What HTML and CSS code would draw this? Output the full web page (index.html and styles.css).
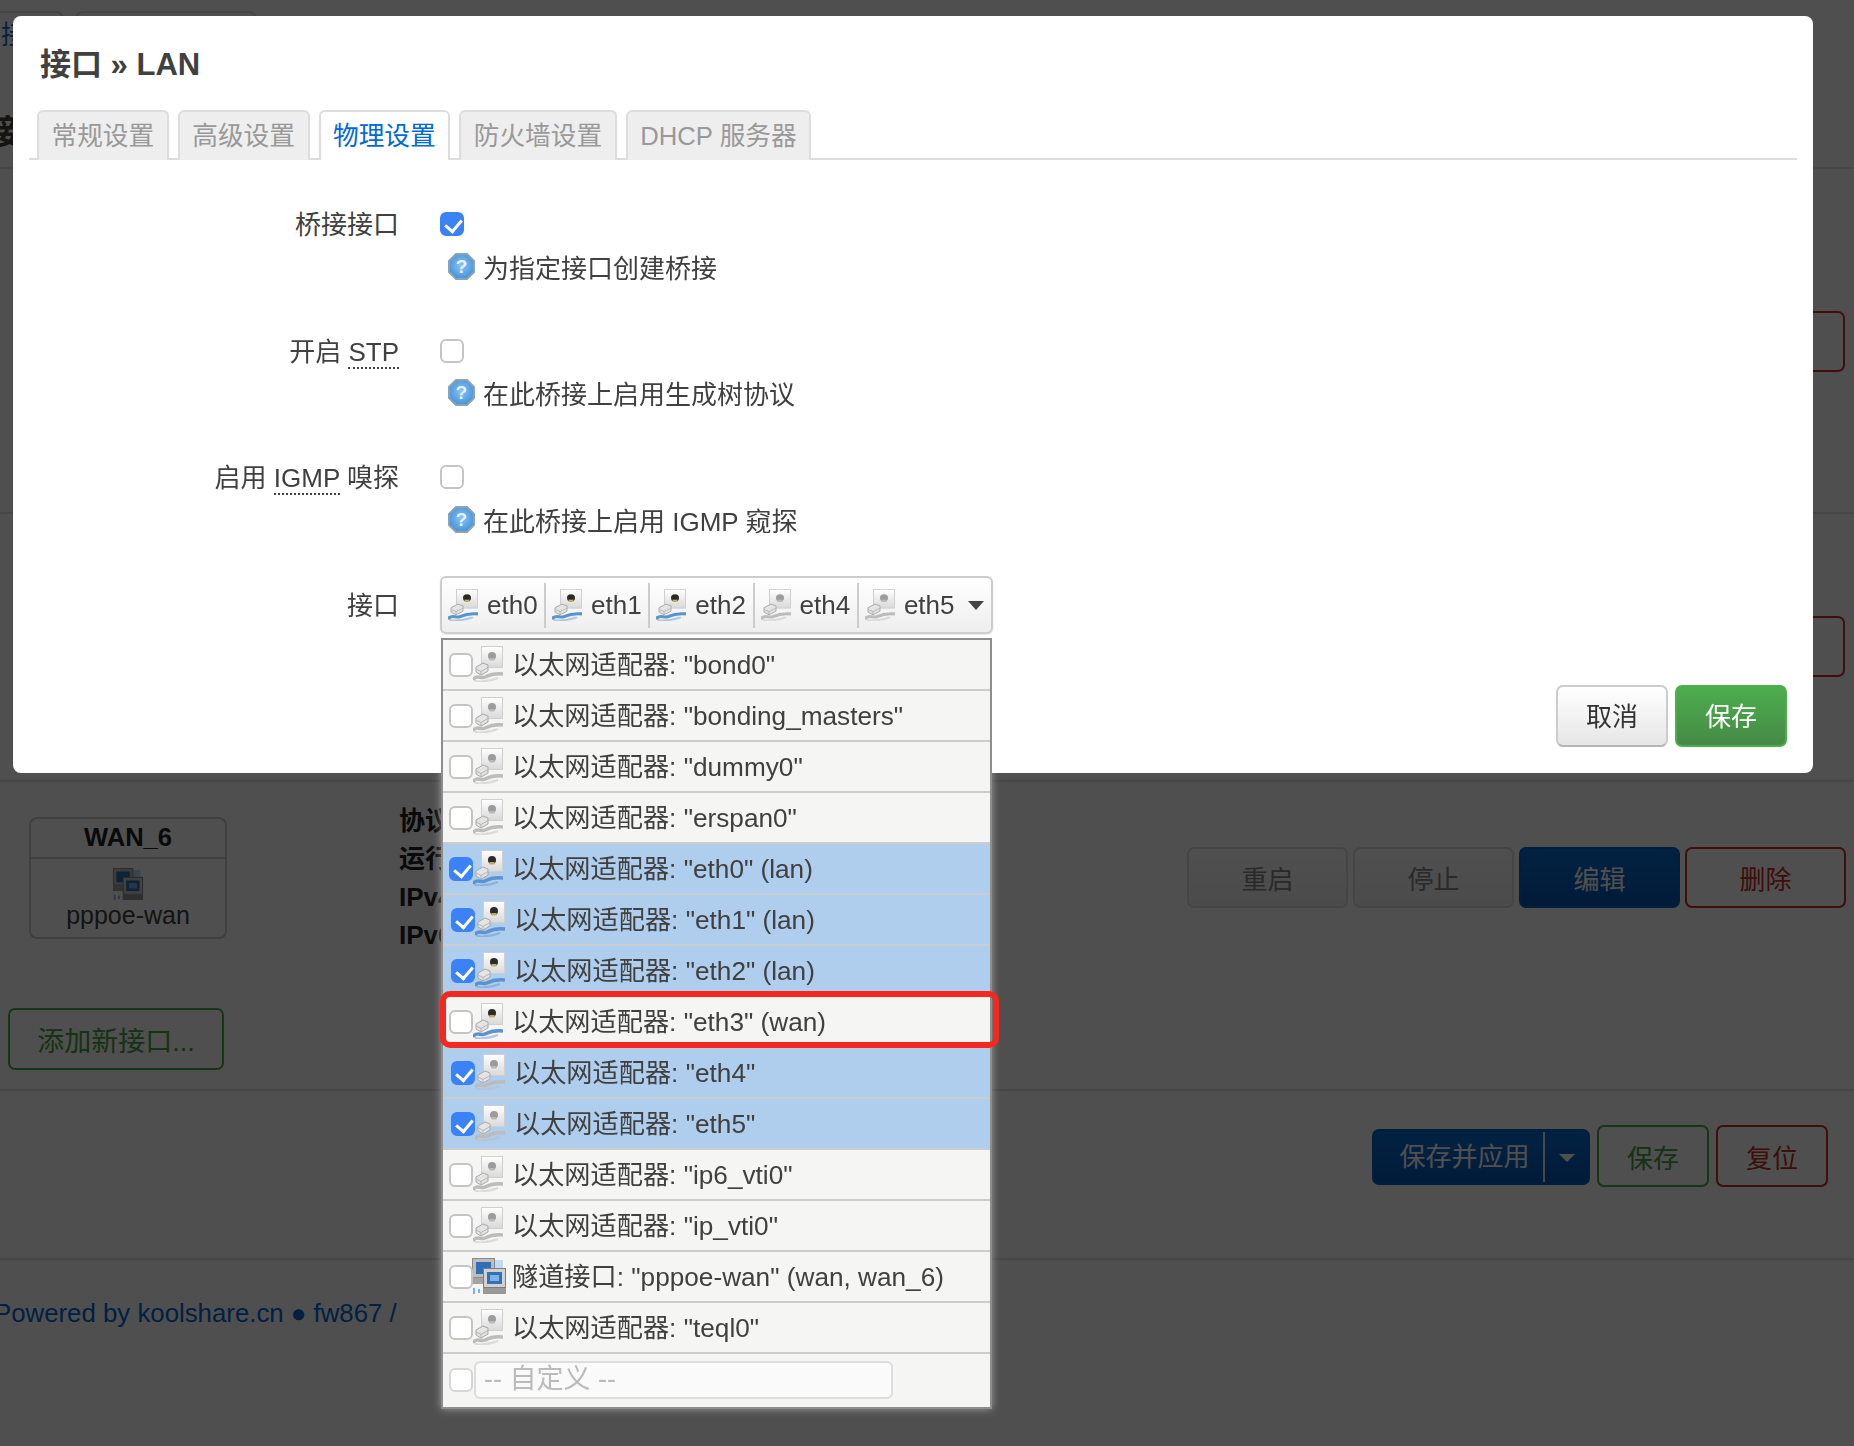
FILE: index.html

```html
<!DOCTYPE html>
<html lang="zh-cn">
<head>
    <meta charset="UTF-8">
    <title>接口 - LAN</title>
    <link rel="stylesheet" href="styles.css">
</head>
<body>
    <svg class="defs" width="0" height="0">
        <defs>
            <linearGradient id="port-fill" x1="0" y1="0" x2="0" y2="1">
                <stop offset="0" stop-color="#ffffff"/>
                <stop offset="1" stop-color="#d9d9d9"/>
            </linearGradient>
            <radialGradient id="help-fill" cx="0.5" cy="0.45" r="0.6">
                <stop offset="0" stop-color="#8cc4f2"/>
                <stop offset="1" stop-color="#3f8fd6"/>
            </radialGradient>
            <symbol id="icon-eth" viewBox="0 0 30 36" preserveAspectRatio="none">
                <rect x="8.5" y="0.5" width="21" height="21" fill="url(#port-fill)" stroke="#cfcfcf"/>
                <circle cx="19" cy="10" r="4" fill="var(--dot)"/>
                <path d="M16.5 12h5v2.5h-5z" fill="var(--dot2)"/>
                <path d="M3 21l7-4 5 2v6l-7 4-5-3z" fill="#e4e4e4" stroke="#a9a9a9"/>
                <path d="M3 23l5 2.5 7-4M8 25.5v3" fill="none" stroke="#b5b5b5"/>
                <path d="M0 34c3-6 8-1 12-3s9-4 18-3" fill="none" stroke="var(--cable)" stroke-width="3.5"/>
                <path d="M2 35c7 1 15 0 23-3" fill="none" stroke="var(--cable)" stroke-opacity="0.45" stroke-width="2"/>
            </symbol>
            <symbol id="icon-tunnel" viewBox="0 0 34 36">
                <rect x="22" y="2" width="9" height="12" fill="#c4dcf3"/>
                <rect x="0.5" y="0.5" width="22" height="19" fill="#bdbdbd" stroke="#8a8a8a"/>
                <rect x="4" y="4" width="15" height="12" fill="#2f6fb5"/>
                <rect x="0" y="20" width="23" height="6" fill="#a4a4a4"/>
                <rect x="11.5" y="10.5" width="22" height="19" fill="#d2d2d2" stroke="#7c7c7c"/>
                <rect x="15" y="14" width="15" height="12" fill="#2f72ba"/>
                <rect x="18" y="17" width="9" height="6" fill="#7fb2e4"/>
                <rect x="11" y="30" width="23" height="6" fill="#999999"/>
                <rect x="1" y="30" width="2" height="6" fill="#7fb2e4"/>
                <rect x="6" y="31" width="2" height="4" fill="#7fb2e4"/>
            </symbol>
            <symbol id="icon-help" viewBox="0 0 27 27">
                <polygon points="8,1 19,1 26,8 26,19 19,26 8,26 1,19 1,8" fill="url(#help-fill)" stroke="#8ba3b5" stroke-width="2"/>
                <text x="13.5" y="20" text-anchor="middle" class="help-mark">?</text>
            </symbol>
        </defs>
    </svg>

    <div class="page">
        <div class="top-tabs">
            <div class="top-tab top-tab-first">接口</div>
            <div class="top-tab top-tab-second"></div>
        </div>
        <h2 class="page-title">接口总览</h2>

        <section class="sec sec-a">
            <button class="btn btn-red btn-row">删除</button>
        </section>
        <section class="sec sec-b">
            <button class="btn btn-red btn-row">删除</button>
        </section>
        <section class="sec sec-wan">
            <div class="wan-box">
                <div class="wan-name">WAN_6</div>
                <div class="wan-body">
                    <svg class="wan-icon"><use href="#icon-tunnel"/></svg>
                    <div>pppoe-wan</div>
                </div>
            </div>
            <div class="wan-info">
                <div>协议:</div>
                <div>运行时间:</div>
                <div>IPv4:</div>
                <div>IPv6:</div>
            </div>
            <div class="wan-actions">
                <button class="btn btn-row btn-off">重启</button>
                <button class="btn btn-row btn-off">停止</button>
                <button class="btn btn-row btn-blue">编辑</button>
                <button class="btn btn-row btn-red">删除</button>
            </div>
            <button class="btn btn-green btn-add">添加新接口...</button>
        </section>
        <section class="sec sec-save">
            <div class="btn btn-blue btn-split">
                <span class="split-text">保存并应用</span>
                <span class="split-arrow"></span>
            </div>
            <button class="btn btn-green btn-small">保存</button>
            <button class="btn btn-red btn-small">复位</button>
        </section>
        <footer class="page-foot">Powered by koolshare.cn ● fw867 /</footer>
    </div>

    <div class="backdrop"></div>

    <div class="modal">
        <h3 class="modal-title">接口 » LAN</h3>
        <div class="tabs">
            <div class="tab">常规设置</div>
            <div class="tab">高级设置</div>
            <div class="tab tab-active">物理设置</div>
            <div class="tab">防火墙设置</div>
            <div class="tab">DHCP 服务器</div>
        </div>

        <form class="form">
            <div class="field">
                <label class="field-label">桥接接口</label>
                <div>
                    <div class="field-line"><span class="check check-on"></span></div>
                    <div class="field-help"><svg class="help-icon"><use href="#icon-help"/></svg>为指定接口创建桥接</div>
                </div>
            </div>
            <div class="field">
                <label class="field-label">开启 <abbr>STP</abbr></label>
                <div>
                    <div class="field-line"><span class="check"></span></div>
                    <div class="field-help"><svg class="help-icon"><use href="#icon-help"/></svg>在此桥接上启用生成树协议</div>
                </div>
            </div>
            <div class="field">
                <label class="field-label">启用 <abbr>IGMP</abbr> 嗅探</label>
                <div>
                    <div class="field-line"><span class="check"></span></div>
                    <div class="field-help"><svg class="help-icon"><use href="#icon-help"/></svg>在此桥接上启用 IGMP 窥探</div>
                </div>
            </div>
            <div class="field field-select">
                <label class="field-label">接口</label>
                <div class="select">
                    <div class="select-box">
                        <span class="chip chip-first live"><svg class="icon"><use href="#icon-eth"/></svg>eth0</span>
                        <span class="chip live"><svg class="icon"><use href="#icon-eth"/></svg>eth1</span>
                        <span class="chip live"><svg class="icon"><use href="#icon-eth"/></svg>eth2</span>
                        <span class="chip"><svg class="icon"><use href="#icon-eth"/></svg>eth4</span>
                        <span class="chip chip-last"><svg class="icon"><use href="#icon-eth"/></svg>eth5</span>
                        <span class="select-arrow"></span>
                    </div>
                    <ul class="menu">
                        <li class="opt"><span class="check"></span><svg class="icon"><use href="#icon-eth"/></svg><span class="opt-text">以太网适配器: "bond0"</span></li>
                        <li class="opt"><span class="check"></span><svg class="icon"><use href="#icon-eth"/></svg><span class="opt-text">以太网适配器: "bonding_masters"</span></li>
                        <li class="opt"><span class="check"></span><svg class="icon"><use href="#icon-eth"/></svg><span class="opt-text">以太网适配器: "dummy0"</span></li>
                        <li class="opt"><span class="check"></span><svg class="icon"><use href="#icon-eth"/></svg><span class="opt-text">以太网适配器: "erspan0"</span></li>
                        <li class="opt opt-on live"><span class="check check-on"></span><svg class="icon"><use href="#icon-eth"/></svg><span class="opt-text">以太网适配器: "eth0" (lan)</span></li>
                        <li class="opt opt-on opt-shift live"><span class="check check-on"></span><svg class="icon"><use href="#icon-eth"/></svg><span class="opt-text">以太网适配器: "eth1" (lan)</span></li>
                        <li class="opt opt-on opt-shift live"><span class="check check-on"></span><svg class="icon"><use href="#icon-eth"/></svg><span class="opt-text">以太网适配器: "eth2" (lan)</span></li>
                        <li class="opt opt-mark live"><span class="check"></span><svg class="icon"><use href="#icon-eth"/></svg><span class="opt-text">以太网适配器: "eth3" (wan)</span></li>
                        <li class="opt opt-on opt-shift"><span class="check check-on"></span><svg class="icon"><use href="#icon-eth"/></svg><span class="opt-text">以太网适配器: "eth4"</span></li>
                        <li class="opt opt-on opt-shift"><span class="check check-on"></span><svg class="icon"><use href="#icon-eth"/></svg><span class="opt-text">以太网适配器: "eth5"</span></li>
                        <li class="opt"><span class="check"></span><svg class="icon"><use href="#icon-eth"/></svg><span class="opt-text">以太网适配器: "ip6_vti0"</span></li>
                        <li class="opt"><span class="check"></span><svg class="icon"><use href="#icon-eth"/></svg><span class="opt-text">以太网适配器: "ip_vti0"</span></li>
                        <li class="opt opt-tunnel"><span class="check"></span><svg class="icon"><use href="#icon-tunnel"/></svg><span class="opt-text">隧道接口: "pppoe-wan" (wan, wan_6)</span></li>
                        <li class="opt"><span class="check"></span><svg class="icon"><use href="#icon-eth"/></svg><span class="opt-text">以太网适配器: "teql0"</span></li>
                        <li class="opt opt-custom"><span class="check check-dim"></span><input class="custom-input" type="text" placeholder="-- 自定义 --"></li>
                    </ul>
                </div>
            </div>
        </form>

        <div class="modal-foot">
            <button class="btn btn-cancel" type="button">取消</button>
            <button class="btn btn-save" type="button">保存</button>
        </div>
    </div>
</body>
</html>
```

FILE: styles.css

```css
* {
    box-sizing: border-box;
}

html, body {
    margin: 0;
    padding: 0;
    height: 1446px;
    overflow: hidden;
}

body {
    font-family: "Liberation Sans", "Noto Sans CJK SC", sans-serif;
    font-size: 26px;
    color: #404040;
    background: #fff;
}

.defs {
    position: absolute;
}

.help-mark {
    font-family: "Liberation Sans", sans-serif;
    font-size: 19px;
    font-weight: bold;
    fill: #e6f2fc;
}

/* page behind the dialog */
.page {
    height: 1446px;
    overflow: hidden;
}

.top-tabs {
    display: flex;
    gap: 11px;
    padding-top: 11px;
    height: 60px;
    margin-left: -10px;
}

.top-tab {
    height: 49px;
    border: 2px solid #ddd;
    border-bottom: none;
    border-radius: 8px 8px 0 0;
}

.top-tab-first {
    width: 74px;
    padding: 1px 0 0 9px;
    color: #0069d6;
    overflow: hidden;
    white-space: nowrap;
}

.top-tab-second {
    width: 182px;
}

.page-title {
    margin: 52px 0 0 -14px;
    font-size: 34px;
    line-height: 40px;
    height: 55px;
    color: #404040;
}

.sec {
    border-top: 2px solid #e4e4e4;
}

.sec-a {
    height: 345px;
    padding: 142px 9px 0 0;
    text-align: right;
}

.sec-b {
    height: 268px;
    padding: 102px 9px 0 0;
    text-align: right;
}

.sec-wan {
    height: 309px;
    display: grid;
    grid-template-columns: 370px 788px 1fr;
    grid-template-rows: 167px auto;
    padding: 35px 10px 0 29px;
}

.wan-box {
    width: 198px;
    height: 122px;
    border: 2px solid #ccc;
    border-radius: 8px;
    text-align: center;
    font-size: 25px;
    color: #404040;
}

.wan-name {
    height: 40px;
    line-height: 36px;
    font-size: 25.6px;
    font-weight: bold;
    color: #222;
    border-bottom: 2px solid #ccc;
}

.wan-icon {
    display: block;
    width: 32px;
    height: 32px;
    margin: 9px auto 0;
}

.wan-body {
    line-height: 30px;
}

.wan-info {
    width: 44px;
    overflow: hidden;
    font-weight: bold;
    line-height: 38px;
    font-size: 26px;
    color: #222;
    white-space: nowrap;
    margin-top: -15px;
}

.wan-actions {
    display: flex;
    gap: 5px;
    justify-content: flex-end;
    margin-top: 30px;
    align-items: flex-start;
}

.sec-save {
    height: 169px;
    display: flex;
    justify-content: flex-end;
    align-items: flex-start;
    gap: 7px;
    padding: 34px 26px 0 0;
}

.page-foot {
    border-top: 2px solid #e4e4e4;
    padding: 39px 0 0 0;
    margin-left: -6px;
    font-size: 25.8px;
    color: #0069d6;
    white-space: nowrap;
}

.btn {
    font-family: inherit;
    font-size: 26px;
    border-radius: 7px;
    border: 2px solid #ccc;
    background: #fff;
    color: #404040;
    padding: 0;
    text-align: center;
}

.btn-row {
    width: 161px;
    height: 61px;
}

.btn-off {
    background: linear-gradient(#fff, #f2f2f2);
    border-color: #ddd;
    color: #888;
}

.btn-blue {
    background: linear-gradient(#0a6ed6, #0557b8);
    border-color: #0a5fc0;
    color: #fff;
}

.btn-red {
    background: #fff;
    border-color: #c9302c;
    color: #c62d28;
}

.btn-green {
    background: #fff;
    border-color: #4cae4c;
    color: #46a046;
}

.btn-add {
    grid-column: 1;
    width: 216px;
    height: 62px;
    margin-left: -21px;
    margin-top: 24px;
    font-size: 27px;
}

.btn-small {
    width: 112px;
    height: 62px;
}

.btn-split {
    display: flex;
    align-items: stretch;
    width: 218px;
    height: 56px;
    margin-top: 4px;
}

.split-text {
    width: 171px;
    line-height: 50px;
    padding-left: 12px;
    border-right: 2px solid #e7e7e7;
    margin: 1px 0;
    white-space: nowrap;
}

.split-arrow {
    width: 0;
    height: 0;
    margin: 23px 0 0 14px;
    border-left: 8px solid transparent;
    border-right: 8px solid transparent;
    border-top: 8px solid #fff;
}

/* dim layer */
.backdrop {
    position: fixed;
    top: 0;
    left: 0;
    width: 100%;
    height: 100%;
    background: rgba(0, 0, 0, 0.69);
}

/* dialog */
.modal {
    position: fixed;
    left: 13px;
    top: 16px;
    width: 1800px;
    height: 757px;
    display: flex;
    flex-direction: column;
    background: #fff;
    border-radius: 8px;
}

.modal-title {
    margin: 0;
    padding: 29px 0 0 27px;
    height: 94px;
    font-size: 31px;
    line-height: 40px;
    font-weight: bold;
    color: #404040;
}

.tabs {
    display: flex;
    gap: 9px;
    margin: 0 16px;
    padding-left: 8px;
    height: 50px;
    border-bottom: 2px solid #ddd;
}

.tab {
    height: 50px;
    padding: 0 12.5px;
    font-size: 25.7px;
    line-height: 48px;
    background: #eee;
    border: 2px solid #ddd;
    border-bottom: none;
    border-radius: 6px 6px 0 0;
    color: #999;
    white-space: nowrap;
}

.tab-active {
    background: #fff;
    color: #0069d6;
}

.form {
    flex: 1;
    padding-top: 45px;
}

.field {
    display: grid;
    grid-template-columns: 386px 1fr;
    column-gap: 41px;
    margin-bottom: 44.5px;
}

.field-label {
    text-align: right;
    line-height: 38px;
    padding-top: 1px;
    white-space: nowrap;
}

.field-label abbr {
    border-bottom: 2px dotted #404040;
}

.field-line {
    height: 38px;
    display: flex;
    align-items: center;
}

.field-help {
    display: flex;
    align-items: center;
    height: 38px;
    margin-top: 4px;
    margin-bottom: 2px;
    padding-left: 8px;
    white-space: nowrap;
}

.help-icon {
    width: 27px;
    height: 27px;
    margin-right: 8px;
}

.field-select {
    margin-top: -8.5px;
    margin-bottom: 0;
}

.field-select .field-label {
    line-height: 58px;
}

.check {
    position: relative;
    display: block;
    flex: none;
    width: 24px;
    height: 24px;
    background: #fff;
    border: 2px solid #c4c4c4;
    border-radius: 6px;
}

.check-on {
    background: #3b82f6;
    border-color: #3b82f6;
}

.check-on::after {
    content: "";
    position: absolute;
    left: 6px;
    top: 2px;
    width: 8px;
    height: 13px;
    border: solid #fff;
    border-width: 0 3px 3px 0;
    transform: rotate(40deg);
}

.check-dim {
    border-color: #d6d6d6;
}

/* multi select */
.select {
    position: relative;
    width: 553px;
}

.select-box {
    display: flex;
    align-items: center;
    height: 58px;
    padding-left: 6px;
    background: linear-gradient(#ffffff, #eeeeee);
    border: 2px solid #ccc;
    border-radius: 6px;
    box-shadow: 0 1px 2px rgba(0, 0, 0, 0.1);
}

.chip {
    display: flex;
    align-items: center;
    height: 45px;
    width: 104.3px;
    padding-left: 6px;
    border-right: 2px solid #ccc;
    white-space: nowrap;
}

.chip-first {
    width: 98px;
    padding-left: 0;
}

.chip-last {
    border-right: none;
    width: 102px;
}

.chip .icon {
    width: 30px;
    height: 32px;
    margin-right: 9px;
}

.select-arrow {
    width: 0;
    height: 0;
    margin-left: 7px;
    border-left: 8px solid transparent;
    border-right: 8px solid transparent;
    border-top: 9px solid #444;
}

.icon {
    flex: none;
    --dot: #9c9c9c;
    --dot2: #b8b8b8;
    --cable: #bcbcbc;
}

.live .icon {
    --dot: #2b2b2b;
    --dot2: #c4ad5c;
    --cable: #5b93d1;
}

.menu {
    position: absolute;
    left: 1px;
    top: 62px;
    width: 551px;
    height: 771px;
    margin: 0;
    padding: 0;
    list-style: none;
    background: #f5f5f3;
    border: 2px solid #8d8d8d;
    box-shadow: 0 0 8px rgba(255, 255, 255, 0.45);
}

.opt {
    position: relative;
    display: flex;
    align-items: center;
    height: 51px;
    padding-left: 6px;
    border-bottom: 2px solid #ccc;
    white-space: nowrap;
}

.opt .icon {
    width: 30px;
    height: 36px;
    margin-top: -2px;
}

.opt-text {
    margin-left: 9px;
    margin-bottom: 4px;
    font-size: 26.2px;
}

.opt-on {
    background: #afcdec;
}

.opt-shift {
    padding-left: 8px;
}

.opt-tunnel .icon {
    width: 34px;
    margin-left: -1px;
    margin-right: -3px;
}

.opt-mark::after {
    content: "";
    position: absolute;
    left: -3px;
    right: -9px;
    top: -6px;
    bottom: -2px;
    border: 6px solid #f4281e;
    border-radius: 10px;
}

.opt-custom {
    border-bottom: none;
    height: 53px;
    padding-bottom: 2px;
}

.custom-input {
    width: 419px;
    height: 38px;
    margin-left: 1px;
    padding: 0 8px;
    font-family: inherit;
    font-size: 27px;
    color: #404040;
    background: #fafafa;
    border: 2px solid #ddd;
    border-radius: 6px;
}

.custom-input::placeholder {
    color: #bbb;
}

.modal-foot {
    display: flex;
    justify-content: flex-end;
    gap: 7px;
    padding: 0 26px 26px 0;
}

.btn-cancel,
.btn-save {
    width: 112px;
    height: 62px;
    padding-bottom: 4px;
}

.btn-cancel {
    background: linear-gradient(#ffffff, #e6e6e6);
    border-color: #ccc;
    border-bottom-color: #b5b5b5;
    color: #333;
}

.btn-save {
    background: linear-gradient(#4cae4c, #468a46);
    border-color: #4cae4c;
    color: #fff;
}
```
